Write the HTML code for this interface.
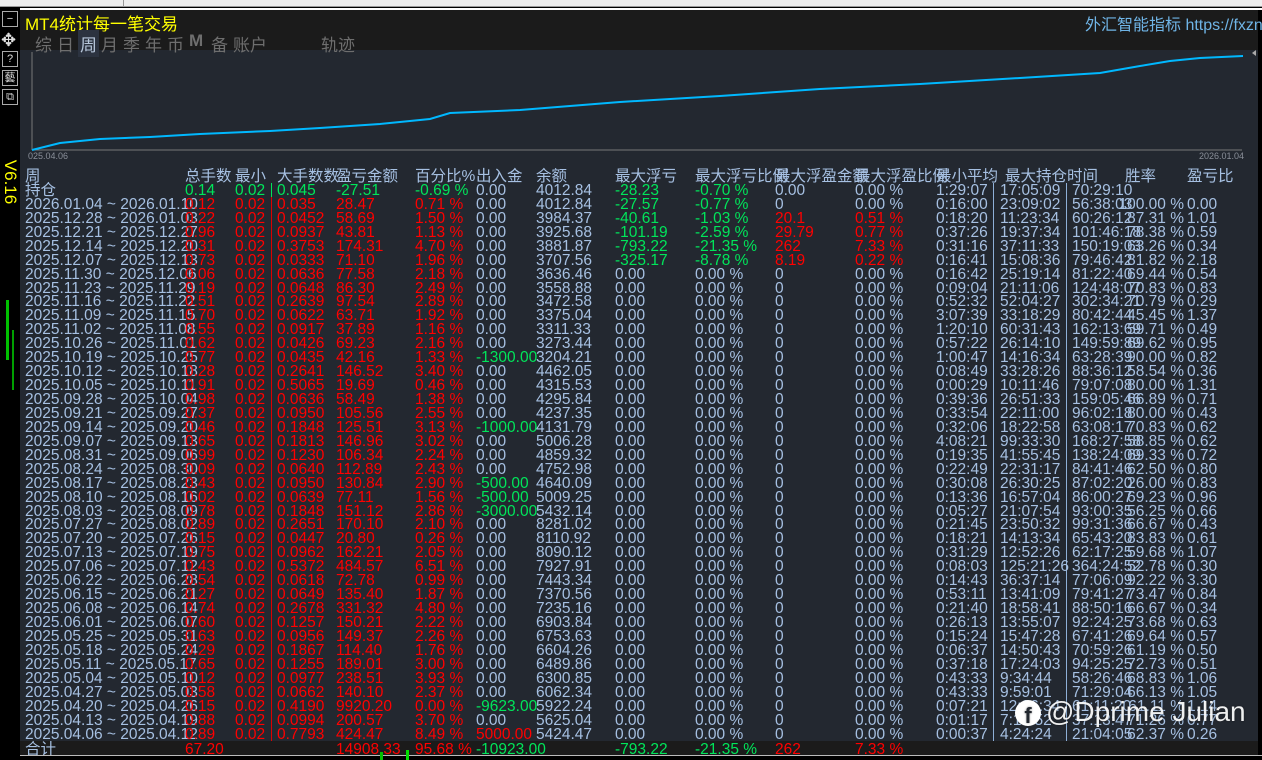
<!DOCTYPE html>
<html><head><meta charset="utf-8"><style>
*{margin:0;padding:0;box-sizing:border-box}
body{width:1262px;height:760px;overflow:hidden;background:#000;position:relative;font-family:"Liberation Sans","Noto Sans CJK SC",sans-serif;color:#a6c0e2}
.topbar{position:absolute;left:0;top:0;width:1262px;height:7px;background:#eeeeee;border-bottom:1px solid #999}
.wline{position:absolute;left:20px;top:8px;width:1242px;height:2px;background:#fff}
.panel{position:absolute;left:20px;top:10px;width:1238px;height:745px;background:#232830}
.titleb{position:absolute;left:20px;top:10px;width:1238px;height:40px;background:#1b1b1b}
.title{position:absolute;left:25px;top:10px;color:#ffff00;font-size:17px}
.tabs{position:absolute;top:31px;font-size:17px;color:#6e6e6e}
.tabs span{position:absolute;white-space:nowrap}
.link{position:absolute;left:1085px;top:11px;color:#6fb4e6;font-size:16px;white-space:nowrap}
.sb{position:absolute;left:2px;width:16px;height:16px;border:1px solid #aaa;color:#ddd;font-size:11px;line-height:14px;text-align:center}
.ver{position:absolute;left:-12px;top:172px;color:#ffff00;font-size:17px;transform:rotate(90deg);white-space:nowrap}
.tbl{position:absolute;left:0;top:170px;width:1262px;font-size:15.5px;line-height:13.95px}
.r{position:relative;height:13.95px;white-space:nowrap}
.r>*{position:absolute;top:0;font-style:normal;font-weight:normal}
.r>:nth-child(1){left:25px}.r>:nth-child(2){left:185px}.r>:nth-child(3){left:235px}.r>:nth-child(4){left:277px}
.r>:nth-child(5){left:336px}.r>:nth-child(6){left:415px}.r>:nth-child(7){left:476px}.r>:nth-child(8){left:536px}
.r>:nth-child(9){left:615px}.r>:nth-child(10){left:695px}.r>:nth-child(11){left:775px}.r>:nth-child(12){left:855px}
.r>:nth-child(13){left:936px}.r>:nth-child(14){left:1000px}.r>:nth-child(15){left:1072px}.r>:nth-child(16){right:78px}.r>:nth-child(17){left:1187px}
.d>:nth-child(2),.d>:nth-child(3),.d>:nth-child(4),.d>:nth-child(5),.d>:nth-child(6){color:#f00}
.g{color:#00e55a!important}.x{color:#f00!important}
.h{font-size:15.5px}
.foot{position:absolute;left:20px;top:741px;width:1238px;height:14px;background:#1b1b1b}
.vl{position:absolute;width:1px}
.wm{position:absolute;left:1015px;top:696px;color:rgba(255,255,255,.93);font-size:28px;white-space:nowrap;text-shadow:0 0 2px rgba(0,0,0,.4)}
.fb{display:inline-block;width:26px;height:26px;border-radius:50%;background:#fff;color:#232830;font-size:22px;font-weight:bold;text-align:center;line-height:31px;vertical-align:-2px;margin-right:5px}
</style></head><body>
<div class="topbar"></div>
<div style="position:absolute;left:123px;top:0;width:1px;height:6px;background:#999"></div>
<div class="wline"></div>
<div class="panel"></div>
<div class="titleb"></div>
<div class="title">MT4统计每一笔交易</div>
<div class="tabs"><span style="left:35px">综</span><span style="left:57px">日</span><span style="left:78px;top:-1px;background:#2c3340;color:#b8c8dc;padding:1px 2px">周</span><span style="left:101px">月</span><span style="left:123px">季</span><span style="left:145px">年</span><span style="left:167px">币</span><span style="left:189px;font-weight:bold">M</span><span style="left:211px">备</span><span style="left:233px">账户</span><span style="left:321px">轨迹</span></div>
<div class="link">外汇智能指标 https://fxznz</div>
<div class="sb" style="top:11px">−</div>
<div style="position:absolute;left:1px;top:30px;color:#ddd;font-size:18px">✥</div>
<div class="sb" style="top:51px">?</div>
<div class="sb" style="top:70px">藝</div>
<div class="sb" style="top:89px">⧉</div>
<div class="ver">V6.16</div>
<div style="position:absolute;left:6px;top:300px;width:3px;height:60px;background:#00c000"></div>
<div style="position:absolute;left:12px;top:330px;width:2px;height:60px;background:#00a000"></div>
<svg style="position:absolute;left:20px;top:50px" width="1238" height="112">
<line x1="12" y1="2" x2="12" y2="100" stroke="#777" stroke-width="1"/>
<line x1="12" y1="100" x2="1222" y2="100" stroke="#777" stroke-width="1"/>
<polyline fill="none" stroke="#00b8ff" stroke-width="2" points="12,100 40,93 80,89 130,87 180,84 250,81 300,78 360,74 410,69 430,63 500,60 600,52 700,46 800,39 900,34 1000,28 1080,23 1120,16 1150,11 1180,8 1223,6"/>
<text x="8" y="109" fill="#8a8f99" font-size="9" font-family="Liberation Sans">025.04.06</text>
<text x="1179" y="109" fill="#8a8f99" font-size="9" font-family="Liberation Sans">2026.01.04</text>
<polygon points="1236,0 1232,3 1236,6" fill="#aaa"/>
</svg>
<div class="foot"></div>
<div class="vl" style="left:271px;top:183px;height:14px;background:#00e55a"></div>
<div class="vl" style="left:271px;top:197px;height:544px;background:#d00"></div>
<div class="vl" style="left:993px;top:183px;height:558px;background:#8fb0d8"></div>
<div class="vl" style="left:1066px;top:183px;height:558px;background:#8fb0d8"></div>
<div class="tbl">
<div class="r h"><b>周</b><b>总手数</b><b>最小</b><b>大手数数</b><b>盈亏金额</b><b>百分比%</b><b>出入金</b><b>余额</b><b>最大浮亏</b><b>最大浮亏比例</b><b>最大浮盈金额</b><b>最大浮盈比例</b><b>最小平均</b><b style="left:1005px">最大持仓时间</b><b></b><b style="right:auto;left:1125px">胜率</b><b>盈亏比</b></div>
<div class="r"><b>持仓</b><b class="g">0.14</b><b class="g">0.02</b><b class="g">0.045</b><b class="g">-27.51</b><b class="g">-0.69 %</b><b>0.00</b><b>4012.84</b><b class="g">-28.23</b><b class="g">-0.70 %</b><b>0.00</b><b>0.00 %</b><b>1:29:07</b><b>17:05:09</b><b>70:29:10</b><b></b><b></b></div>
<div class="r d"><b>2026.01.04 ~ 2026.01.10</b><b>0.12</b><b>0.02</b><b>0.035</b><b>28.47</b><b>0.71 %</b><b>0.00</b><b>4012.84</b><b class="g">-27.57</b><b class="g">-0.77 %</b><b>0</b><b>0.00 %</b><b>0:16:00</b><b>23:09:02</b><b>56:38:03</b><b>100.00 %</b><b>0.00</b></div>
<div class="r d"><b>2025.12.28 ~ 2026.01.03</b><b>0.22</b><b>0.02</b><b>0.0452</b><b>58.69</b><b>1.50 %</b><b>0.00</b><b>3984.37</b><b class="g">-40.61</b><b class="g">-1.03 %</b><b class="x">20.1</b><b class="x">0.51 %</b><b>0:18:20</b><b>11:23:34</b><b>60:26:12</b><b>87.31 %</b><b>1.01</b></div>
<div class="r d"><b>2025.12.21 ~ 2025.12.27</b><b>0.96</b><b>0.02</b><b>0.0937</b><b>43.81</b><b>1.13 %</b><b>0.00</b><b>3925.68</b><b class="g">-101.19</b><b class="g">-2.59 %</b><b class="x">29.79</b><b class="x">0.77 %</b><b>0:37:26</b><b>19:37:34</b><b>101:46:18</b><b>78.38 %</b><b>0.59</b></div>
<div class="r d"><b>2025.12.14 ~ 2025.12.20</b><b>0.31</b><b>0.02</b><b>0.3753</b><b>174.31</b><b>4.70 %</b><b>0.00</b><b>3881.87</b><b class="g">-793.22</b><b class="g">-21.35 %</b><b class="x">262</b><b class="x">7.33 %</b><b>0:31:16</b><b>37:11:33</b><b>150:19:03</b><b>63.26 %</b><b>0.34</b></div>
<div class="r d"><b>2025.12.07 ~ 2025.12.13</b><b>0.73</b><b>0.02</b><b>0.0333</b><b>71.10</b><b>1.96 %</b><b>0.00</b><b>3707.56</b><b class="g">-325.17</b><b class="g">-8.78 %</b><b class="x">8.19</b><b class="x">0.22 %</b><b>0:16:41</b><b>15:08:36</b><b>79:46:42</b><b>81.82 %</b><b>2.18</b></div>
<div class="r d"><b>2025.11.30 ~ 2025.12.06</b><b>0.06</b><b>0.02</b><b>0.0636</b><b>77.58</b><b>2.18 %</b><b>0.00</b><b>3636.46</b><b>0.00</b><b>0.00 %</b><b>0</b><b>0.00 %</b><b>0:16:42</b><b>25:19:14</b><b>81:22:40</b><b>69.44 %</b><b>0.54</b></div>
<div class="r d"><b>2025.11.23 ~ 2025.11.29</b><b>0.19</b><b>0.02</b><b>0.0648</b><b>86.30</b><b>2.49 %</b><b>0.00</b><b>3558.88</b><b>0.00</b><b>0.00 %</b><b>0</b><b>0.00 %</b><b>0:09:04</b><b>21:11:06</b><b>124:48:07</b><b>70.83 %</b><b>0.83</b></div>
<div class="r d"><b>2025.11.16 ~ 2025.11.22</b><b>0.51</b><b>0.02</b><b>0.2639</b><b>97.54</b><b>2.89 %</b><b>0.00</b><b>3472.58</b><b>0.00</b><b>0.00 %</b><b>0</b><b>0.00 %</b><b>0:52:32</b><b>52:04:27</b><b>302:34:21</b><b>70.79 %</b><b>0.29</b></div>
<div class="r d"><b>2025.11.09 ~ 2025.11.15</b><b>0.70</b><b>0.02</b><b>0.0622</b><b>63.71</b><b>1.92 %</b><b>0.00</b><b>3375.04</b><b>0.00</b><b>0.00 %</b><b>0</b><b>0.00 %</b><b>3:07:39</b><b>33:18:29</b><b>80:42:44</b><b>45.45 %</b><b>1.37</b></div>
<div class="r d"><b>2025.11.02 ~ 2025.11.08</b><b>0.55</b><b>0.02</b><b>0.0917</b><b>37.89</b><b>1.16 %</b><b>0.00</b><b>3311.33</b><b>0.00</b><b>0.00 %</b><b>0</b><b>0.00 %</b><b>1:20:10</b><b>60:31:43</b><b>162:13:69</b><b>59.71 %</b><b>0.49</b></div>
<div class="r d"><b>2025.10.26 ~ 2025.11.01</b><b>0.62</b><b>0.02</b><b>0.0426</b><b>69.23</b><b>2.16 %</b><b>0.00</b><b>3273.44</b><b>0.00</b><b>0.00 %</b><b>0</b><b>0.00 %</b><b>0:57:22</b><b>26:14:10</b><b>149:59:89</b><b>69.62 %</b><b>0.95</b></div>
<div class="r d"><b>2025.10.19 ~ 2025.10.25</b><b>0.77</b><b>0.02</b><b>0.0435</b><b>42.16</b><b>1.33 %</b><b class="g">-1300.00</b><b>3204.21</b><b>0.00</b><b>0.00 %</b><b>0</b><b>0.00 %</b><b>1:00:47</b><b>14:16:34</b><b>63:28:39</b><b>90.00 %</b><b>0.82</b></div>
<div class="r d"><b>2025.10.12 ~ 2025.10.18</b><b>0.28</b><b>0.02</b><b>0.2641</b><b>146.52</b><b>3.40 %</b><b>0.00</b><b>4462.05</b><b>0.00</b><b>0.00 %</b><b>0</b><b>0.00 %</b><b>0:08:49</b><b>33:28:26</b><b>88:36:12</b><b>58.54 %</b><b>0.36</b></div>
<div class="r d"><b>2025.10.05 ~ 2025.10.11</b><b>0.91</b><b>0.02</b><b>0.5065</b><b>19.69</b><b>0.46 %</b><b>0.00</b><b>4315.53</b><b>0.00</b><b>0.00 %</b><b>0</b><b>0.00 %</b><b>0:00:29</b><b>10:11:46</b><b>79:07:08</b><b>80.00 %</b><b>1.31</b></div>
<div class="r d"><b>2025.09.28 ~ 2025.10.04</b><b>0.98</b><b>0.02</b><b>0.0636</b><b>58.49</b><b>1.38 %</b><b>0.00</b><b>4295.84</b><b>0.00</b><b>0.00 %</b><b>0</b><b>0.00 %</b><b>0:39:36</b><b>26:51:33</b><b>159:05:46</b><b>66.89 %</b><b>0.71</b></div>
<div class="r d"><b>2025.09.21 ~ 2025.09.27</b><b>0.37</b><b>0.02</b><b>0.0950</b><b>105.56</b><b>2.55 %</b><b>0.00</b><b>4237.35</b><b>0.00</b><b>0.00 %</b><b>0</b><b>0.00 %</b><b>0:33:54</b><b>22:11:00</b><b>96:02:18</b><b>80.00 %</b><b>0.43</b></div>
<div class="r d"><b>2025.09.14 ~ 2025.09.20</b><b>0.46</b><b>0.02</b><b>0.1848</b><b>125.51</b><b>3.13 %</b><b class="g">-1000.00</b><b>4131.79</b><b>0.00</b><b>0.00 %</b><b>0</b><b>0.00 %</b><b>0:32:06</b><b>18:22:58</b><b>63:08:17</b><b>70.83 %</b><b>0.62</b></div>
<div class="r d"><b>2025.09.07 ~ 2025.09.13</b><b>0.65</b><b>0.02</b><b>0.1813</b><b>146.96</b><b>3.02 %</b><b>0.00</b><b>5006.28</b><b>0.00</b><b>0.00 %</b><b>0</b><b>0.00 %</b><b>4:08:21</b><b>99:33:30</b><b>168:27:58</b><b>58.85 %</b><b>0.62</b></div>
<div class="r d"><b>2025.08.31 ~ 2025.09.06</b><b>0.99</b><b>0.02</b><b>0.1230</b><b>106.34</b><b>2.24 %</b><b>0.00</b><b>4859.32</b><b>0.00</b><b>0.00 %</b><b>0</b><b>0.00 %</b><b>0:19:35</b><b>41:55:45</b><b>138:24:09</b><b>69.33 %</b><b>0.72</b></div>
<div class="r d"><b>2025.08.24 ~ 2025.08.30</b><b>0.09</b><b>0.02</b><b>0.0640</b><b>112.89</b><b>2.43 %</b><b>0.00</b><b>4752.98</b><b>0.00</b><b>0.00 %</b><b>0</b><b>0.00 %</b><b>0:22:49</b><b>22:31:17</b><b>84:41:46</b><b>62.50 %</b><b>0.80</b></div>
<div class="r d"><b>2025.08.17 ~ 2025.08.23</b><b>0.43</b><b>0.02</b><b>0.0950</b><b>130.84</b><b>2.90 %</b><b class="g">-500.00</b><b>4640.09</b><b>0.00</b><b>0.00 %</b><b>0</b><b>0.00 %</b><b>0:30:08</b><b>26:30:25</b><b>87:02:20</b><b>26.00 %</b><b>0.83</b></div>
<div class="r d"><b>2025.08.10 ~ 2025.08.16</b><b>0.02</b><b>0.02</b><b>0.0639</b><b>77.11</b><b>1.56 %</b><b class="g">-500.00</b><b>5009.25</b><b>0.00</b><b>0.00 %</b><b>0</b><b>0.00 %</b><b>0:13:36</b><b>16:57:04</b><b>86:00:27</b><b>69.23 %</b><b>0.96</b></div>
<div class="r d"><b>2025.08.03 ~ 2025.08.09</b><b>0.78</b><b>0.02</b><b>0.1848</b><b>151.12</b><b>2.86 %</b><b class="g">-3000.00</b><b>5432.14</b><b>0.00</b><b>0.00 %</b><b>0</b><b>0.00 %</b><b>0:05:27</b><b>21:07:54</b><b>93:00:35</b><b>56.25 %</b><b>0.66</b></div>
<div class="r d"><b>2025.07.27 ~ 2025.08.02</b><b>0.89</b><b>0.02</b><b>0.2651</b><b>170.10</b><b>2.10 %</b><b>0.00</b><b>8281.02</b><b>0.00</b><b>0.00 %</b><b>0</b><b>0.00 %</b><b>0:21:45</b><b>23:50:32</b><b>99:31:36</b><b>66.67 %</b><b>0.43</b></div>
<div class="r d"><b>2025.07.20 ~ 2025.07.26</b><b>0.15</b><b>0.02</b><b>0.0447</b><b>20.80</b><b>0.26 %</b><b>0.00</b><b>8110.92</b><b>0.00</b><b>0.00 %</b><b>0</b><b>0.00 %</b><b>0:18:21</b><b>14:13:34</b><b>65:43:20</b><b>83.83 %</b><b>0.61</b></div>
<div class="r d"><b>2025.07.13 ~ 2025.07.19</b><b>0.75</b><b>0.02</b><b>0.0962</b><b>162.21</b><b>2.05 %</b><b>0.00</b><b>8090.12</b><b>0.00</b><b>0.00 %</b><b>0</b><b>0.00 %</b><b>0:31:29</b><b>12:52:26</b><b>62:17:25</b><b>59.68 %</b><b>1.07</b></div>
<div class="r d"><b>2025.07.06 ~ 2025.07.12</b><b>0.43</b><b>0.02</b><b>0.5372</b><b>484.57</b><b>6.51 %</b><b>0.00</b><b>7927.91</b><b>0.00</b><b>0.00 %</b><b>0</b><b>0.00 %</b><b>0:08:03</b><b>125:21:26</b><b>364:24:52</b><b>52.78 %</b><b>0.30</b></div>
<div class="r d"><b>2025.06.22 ~ 2025.06.28</b><b>0.54</b><b>0.02</b><b>0.0618</b><b>72.78</b><b>0.99 %</b><b>0.00</b><b>7443.34</b><b>0.00</b><b>0.00 %</b><b>0</b><b>0.00 %</b><b>0:14:43</b><b>36:37:14</b><b>77:06:09</b><b>92.22 %</b><b>3.30</b></div>
<div class="r d"><b>2025.06.15 ~ 2025.06.21</b><b>0.27</b><b>0.02</b><b>0.0649</b><b>135.40</b><b>1.87 %</b><b>0.00</b><b>7370.56</b><b>0.00</b><b>0.00 %</b><b>0</b><b>0.00 %</b><b>0:53:11</b><b>13:41:09</b><b>79:41:27</b><b>73.47 %</b><b>0.84</b></div>
<div class="r d"><b>2025.06.08 ~ 2025.06.14</b><b>0.74</b><b>0.02</b><b>0.2678</b><b>331.32</b><b>4.80 %</b><b>0.00</b><b>7235.16</b><b>0.00</b><b>0.00 %</b><b>0</b><b>0.00 %</b><b>0:21:40</b><b>18:58:41</b><b>88:50:16</b><b>66.67 %</b><b>0.34</b></div>
<div class="r d"><b>2025.06.01 ~ 2025.06.07</b><b>0.60</b><b>0.02</b><b>0.1257</b><b>150.21</b><b>2.22 %</b><b>0.00</b><b>6903.84</b><b>0.00</b><b>0.00 %</b><b>0</b><b>0.00 %</b><b>0:26:13</b><b>13:55:07</b><b>92:24:25</b><b>73.68 %</b><b>0.63</b></div>
<div class="r d"><b>2025.05.25 ~ 2025.05.31</b><b>0.63</b><b>0.02</b><b>0.0956</b><b>149.37</b><b>2.26 %</b><b>0.00</b><b>6753.63</b><b>0.00</b><b>0.00 %</b><b>0</b><b>0.00 %</b><b>0:15:24</b><b>15:47:28</b><b>67:41:26</b><b>69.64 %</b><b>0.57</b></div>
<div class="r d"><b>2025.05.18 ~ 2025.05.24</b><b>0.29</b><b>0.02</b><b>0.1867</b><b>114.40</b><b>1.76 %</b><b>0.00</b><b>6604.26</b><b>0.00</b><b>0.00 %</b><b>0</b><b>0.00 %</b><b>0:06:37</b><b>14:50:43</b><b>70:59:26</b><b>61.19 %</b><b>0.50</b></div>
<div class="r d"><b>2025.05.11 ~ 2025.05.17</b><b>0.65</b><b>0.02</b><b>0.1255</b><b>189.01</b><b>3.00 %</b><b>0.00</b><b>6489.86</b><b>0.00</b><b>0.00 %</b><b>0</b><b>0.00 %</b><b>0:37:18</b><b>17:24:03</b><b>94:25:25</b><b>72.73 %</b><b>0.51</b></div>
<div class="r d"><b>2025.05.04 ~ 2025.05.10</b><b>0.12</b><b>0.02</b><b>0.0977</b><b>238.51</b><b>3.93 %</b><b>0.00</b><b>6300.85</b><b>0.00</b><b>0.00 %</b><b>0</b><b>0.00 %</b><b>0:43:33</b><b>9:34:44</b><b>58:26:46</b><b>68.83 %</b><b>1.06</b></div>
<div class="r d"><b>2025.04.27 ~ 2025.05.03</b><b>0.58</b><b>0.02</b><b>0.0662</b><b>140.10</b><b>2.37 %</b><b>0.00</b><b>6062.34</b><b>0.00</b><b>0.00 %</b><b>0</b><b>0.00 %</b><b>0:43:33</b><b>9:59:01</b><b>71:29:04</b><b>66.13 %</b><b>1.05</b></div>
<div class="r d"><b>2025.04.20 ~ 2025.04.26</b><b>0.15</b><b>0.02</b><b>0.4190</b><b>9920.20</b><b>0.00 %</b><b class="g">-9623.00</b><b>5922.24</b><b>0.00</b><b>0.00 %</b><b>0</b><b>0.00 %</b><b>0:07:21</b><b>12:26:34</b><b>61:11:20</b><b>61.11 %</b><b>1.14</b></div>
<div class="r d"><b>2025.04.13 ~ 2025.04.19</b><b>0.88</b><b>0.02</b><b>0.0994</b><b>200.57</b><b>3.70 %</b><b>0.00</b><b>5625.04</b><b>0.00</b><b>0.00 %</b><b>0</b><b>0.00 %</b><b>0:01:17</b><b>7:19:52</b><b>37:13:47</b><b>71.26 %</b><b>0.77</b></div>
<div class="r d"><b>2025.04.06 ~ 2025.04.12</b><b>0.89</b><b>0.02</b><b>0.7793</b><b>424.47</b><b>8.49 %</b><b class="x">5000.00</b><b>5424.47</b><b>0.00</b><b>0.00 %</b><b>0</b><b>0.00 %</b><b>0:00:37</b><b>4:24:24</b><b>21:04:05</b><b>62.37 %</b><b>0.26</b></div>
<div class="r d" style="margin-top:2px"><b>合计</b><b>67.20</b><b></b><b></b><b>14908.33</b><b>95.68 %</b><b class="g">-10923.00</b><b></b><b class="g">-793.22</b><b class="g">-21.35 %</b><b class="x">262</b><b class="x">7.33 %</b><b></b><b></b><b></b><b></b><b></b></div>
</div>
<div style="position:absolute;left:20px;top:755px;width:1242px;height:1px;background:#bbb"></div>
<div style="position:absolute;left:380px;top:752px;width:3px;height:8px;background:#00c000"></div>
<div style="position:absolute;left:406px;top:750px;width:3px;height:10px;background:#00e000"></div>
<div class="wm"><span class="fb">f</span>@Dprime Julian</div>
</body></html>
